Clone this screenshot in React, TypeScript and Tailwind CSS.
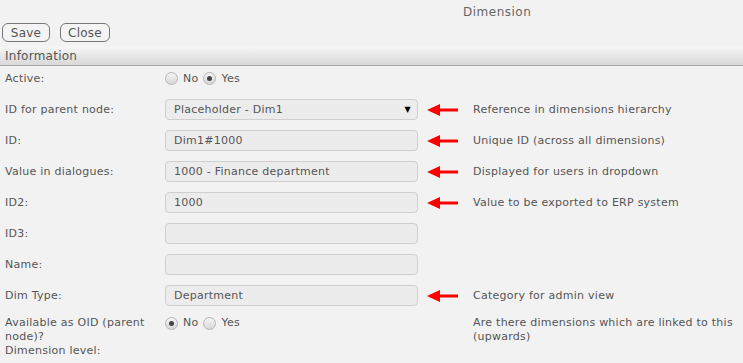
const font = { fontFamily: '"DejaVu Sans", Verdana, sans-serif' };

function Arrow() {
  return (
    <svg width="32" height="12" viewBox="0 0 32 12" className="shrink-0">
      <polygon points="0,6 13,0 13,4.5 31,4.5 31,7.5 13,7.5 13,12" fill="#f00" />
    </svg>
  );
}

function Radio({ checked }: { checked?: boolean }) {
  return (
    <span className="inline-flex h-[13px] w-[13px] items-center justify-center rounded-full border border-[#b5b5b5] bg-gradient-to-b from-[#f4f4f4] to-[#d8d8d8]">
      {checked && <span className="h-[5px] w-[5px] rounded-full bg-[#444]" />}
    </span>
  );
}

function RadioPair({ yes }: { yes: boolean }) {
  return (
    <div className="flex items-center gap-[5px]">
      <Radio checked={!yes} />
      <span>No</span>
      <Radio checked={yes} />
      <span>Yes</span>
    </div>
  );
}

function Box({ value, select }: { value?: string; select?: boolean }) {
  return (
    <div className="flex h-[21px] w-[253px] items-center justify-between rounded-[4px] border border-[#cfcfcf] bg-[#ececec] pl-[8px] pr-[6px]">
      <span>{value}</span>
      {select && <span className="text-[8px] text-black">▼</span>}
    </div>
  );
}

function Row({
  label,
  children,
  help,
  arrow,
}: {
  label: string;
  children?: React.ReactNode;
  help?: string;
  arrow?: boolean;
}) {
  return (
    <div className="flex min-h-[21px] items-center">
      <div className="w-[165px] shrink-0 pl-[5px]">{label}</div>
      <div className="w-[262px] shrink-0">{children}</div>
      <div className="w-[46px] shrink-0">{arrow && <Arrow />}</div>
      <div>{help}</div>
    </div>
  );
}

export default function App() {
  return (
    <div
      className="h-[363px] w-[743px] overflow-hidden bg-[#f2f2f2] text-[11px] leading-[14px] tracking-[0.25px] text-[#555]"
      style={font}
    >
      <div className="flex h-[23px] items-center pl-[463px] text-[12px] tracking-[0.5px] text-[#666]">Dimension</div>
      <div className="flex gap-[10px] px-[2px]">
        <button className="h-[19px] w-[48px] rounded-[6px] border border-[#777] bg-[#f4f4f4] text-[12px] text-[#555]">Save</button>
        <button className="h-[19px] w-[50px] rounded-[6px] border border-[#777] bg-[#f4f4f4] text-[12px] text-[#555]">Close</button>
      </div>
      <div className="mt-[4px] flex h-[20px] items-center border-b border-[#a8a8a8] bg-gradient-to-b from-[#f6f6f6] to-[#d9d9d9] pl-[5px] pt-[1px] text-[12px]">
        Information
      </div>
      <div className="flex flex-col gap-[10px] pt-[2px]">
        <Row label="Active:">
          <RadioPair yes />
        </Row>
        <Row label="ID for parent node:" arrow help="Reference in dimensions hierarchy">
          <Box value="Placeholder - Dim1" select />
        </Row>
        <Row label="ID:" arrow help="Unique ID (across all dimensions)">
          <Box value="Dim1#1000" />
        </Row>
        <Row label="Value in dialogues:" arrow help="Displayed for users in dropdown">
          <Box value="1000 - Finance department" />
        </Row>
        <Row label="ID2:" arrow help="Value to be exported to ERP system">
          <Box value="1000" />
        </Row>
        <Row label="ID3:">
          <Box />
        </Row>
        <Row label="Name:">
          <Box />
        </Row>
        <Row label="Dim Type:" arrow help="Category for admin view">
          <Box value="Department" />
        </Row>
        <div>
          <div className="flex items-start">
            <div className="w-[165px] shrink-0 pl-[5px] pr-[12px]">Available as OID (parent node)?</div>
            <div className="w-[308px] shrink-0">
              <RadioPair yes={false} />
            </div>
            <div className="w-[268px]">Are there dimensions which are linked to this (upwards)</div>
          </div>
          <div className="pl-[5px]">Dimension level:</div>
        </div>
      </div>
    </div>
  );
}
